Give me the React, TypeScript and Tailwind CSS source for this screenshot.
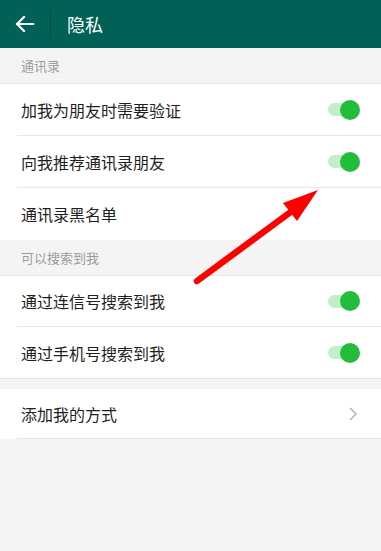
import React from 'react';

const font = { fontFamily: '"Noto Sans CJK SC", "Noto Sans", sans-serif' };

const Toggle = () => (
    <div className="relative w-[32px] h-[20px] flex items-center">
        <div className="w-[28px] h-[13px] rounded-full bg-[#c2eec9]" />
        <div className="absolute right-0 top-0 w-[20px] h-[20px] rounded-full bg-[#22bd3c]" />
    </div>
);

const Row = ({ label, right, last, h = 'h-[52px]' }: { label: string; right?: React.ReactNode; last?: boolean; h?: string }) => (
    <div className="bg-white pl-[17px]">
        <div className={`${h} flex items-center justify-between pr-[21px] ${last ? '' : 'border-b border-[#e6e6e6]'}`}>
            <span className="text-[16px] text-[#1f1f1f] pl-[4px]">{label}</span>
            {right}
        </div>
    </div>
);

const SectionTitle = ({ title }: { title: string }) => (
    <div className="h-[36px] flex items-center px-[21px] text-[13px] text-[#9c9c9c] border-b border-[#e6e6e6]">
        {title}
    </div>
);

const Chevron = () => (
    <svg width="10" height="16" viewBox="0 0 10 16" className="mr-[2px]">
        <path d="M2 2 L8 8 L2 14" fill="none" stroke="#b0b0b0" strokeWidth="1.4" />
    </svg>
);

export default function App() {
    return (
        <div className="relative w-[381px] h-[551px] bg-[#f4f4f4] overflow-hidden" style={font}>
            <div className="h-[48px] bg-[#016156] flex items-center">
                <div className="w-[50px] flex justify-center">
                    <svg width="20" height="18" viewBox="0 0 20 18">
                        <path d="M18 9 H3 M9 2 L2 9 L9 16" fill="none" stroke="white" strokeWidth="2.2" strokeLinecap="square" />
                    </svg>
                </div>
                <div className="w-px h-[26px] bg-[#004a41]" />
                <span className="ml-[16px] text-[18px] text-white">隐私</span>
            </div>

            <SectionTitle title="通讯录" />
            <Row label="加我为朋友时需要验证" right={<Toggle />} />
            <Row label="向我推荐通讯录朋友" right={<Toggle />} />
            <Row label="通讯录黑名单" last />

            <SectionTitle title="可以搜索到我" />
            <Row label="通过连信号搜索到我" right={<Toggle />} h="h-[51px]" />
            <Row label="通过手机号搜索到我" right={<Toggle />} last h="h-[51px]" />

            <div className="h-[11px] border-t border-[#e6e6e6]" />
            <Row label="添加我的方式" right={<Chevron />} h="h-[50px]" />

            <svg className="absolute left-0 top-0 pointer-events-none" width="381" height="551" viewBox="0 0 381 551">
                <line x1="197" y1="281" x2="292" y2="211" stroke="#ff0000" strokeWidth="6.5" strokeLinecap="round" />
                <polygon points="318,190 283,203 297,221" fill="#ff0000" />
            </svg>
        </div>
    );
}
